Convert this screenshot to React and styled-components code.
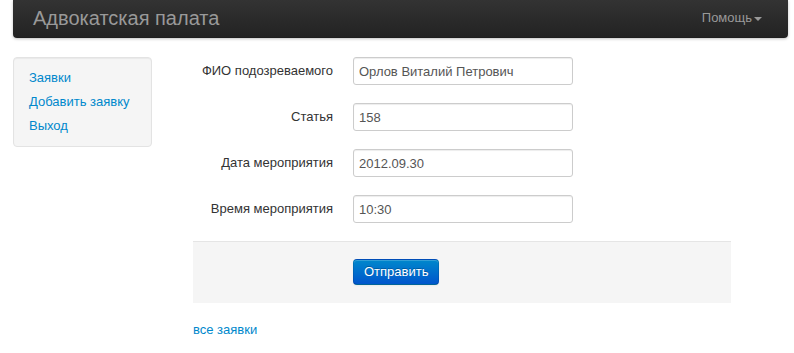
import React, { useState } from 'react';
import styled, { createGlobalStyle } from 'styled-components';

const GlobalStyle = createGlobalStyle`
  body {
    margin: 0;
    background: #fff;
    font-family: "Liberation Sans", Arial, Helvetica, sans-serif;
    font-size: 13px;
    line-height: 18px;
    color: #333;
  }
`;

const fields = [
  { id: 'fio', label: 'ФИО подозреваемого', value: 'Орлов Виталий Петрович' },
  { id: 'article', label: 'Статья', value: '158' },
  { id: 'date', label: 'Дата мероприятия', value: '2012.09.30' },
  { id: 'time', label: 'Время мероприятия', value: '10:30' },
];

const App = () => {
  const [values, setValues] = useState(
    Object.fromEntries(fields.map(f => [f.id, f.value]))
  );

  const handleChange = (id, value) => {
    setValues(prev => ({ ...prev, [id]: value }));
  };

  return (
    <>
      <GlobalStyle />
      <Page>
        <Navbar>
          <Brand href="#">Адвокатская палата</Brand>
          <HelpMenu href="#">
            Помощь
            <Caret />
          </HelpMenu>
        </Navbar>
        <Main>
          <Sidebar>
            <NavLink href="#">Заявки</NavLink>
            <NavLink href="#">Добавить заявку</NavLink>
            <NavLink href="#">Выход</NavLink>
          </Sidebar>
          <Content>
            <Form onSubmit={e => e.preventDefault()}>
              {fields.map(f => (
                <ControlGroup key={f.id}>
                  <ControlLabel htmlFor={f.id}>{f.label}</ControlLabel>
                  <Input
                    id={f.id}
                    value={values[f.id]}
                    onChange={e => handleChange(f.id, e.target.value)}
                  />
                </ControlGroup>
              ))}
              <FormActions>
                <PrimaryButton type="submit">Отправить</PrimaryButton>
              </FormActions>
            </Form>
            <BottomLink href="#">все заявки</BottomLink>
          </Content>
        </Main>
      </Page>
    </>
  );
};

export default App;

const Page = styled.div`
  width: 775px;
  padding-left: 13px;
`;

const Navbar = styled.div`
  display: flex;
  align-items: center;
  justify-content: space-between;
  height: 38px;
  padding: 0 20px;
  box-sizing: border-box;
  background-image: linear-gradient(to bottom, #333333, #222222);
  border-radius: 0 0 4px 4px;
  box-shadow: 0 1px 3px rgba(0, 0, 0, 0.25), inset 0 -1px 0 rgba(0, 0, 0, 0.1);
`;

const Brand = styled.a`
  font-size: 20px;
  line-height: 1;
  color: #999;
  text-decoration: none;
  margin-top: -3px;
`;

const HelpMenu = styled.a`
  display: flex;
  align-items: center;
  gap: 2px;
  color: #999;
  font-size: 13px;
  text-decoration: none;
  margin-right: 6px;
  margin-top: -2px;
`;

const Caret = styled.span`
  width: 0;
  height: 0;
  margin-top: 2px;
  border-left: 4px solid transparent;
  border-right: 4px solid transparent;
  border-top: 4px solid #999;
`;

const Main = styled.div`
  display: flex;
  margin-top: 19px;
`;

const Sidebar = styled.div`
  display: flex;
  flex-direction: column;
  width: 139px;
  height: 90px;
  box-sizing: border-box;
  padding: 8px 0;
  background: #f5f5f5;
  border: 1px solid #e3e3e3;
  border-radius: 4px;
  box-shadow: inset 0 1px 1px rgba(0, 0, 0, 0.05);
`;

const NavLink = styled.a`
  padding: 3px 15px;
  color: #0088cc;
  text-decoration: none;
`;

const Content = styled.div`
  width: 538px;
  margin-left: 41px;
`;

const Form = styled.form`
  margin: 0;
`;

const ControlGroup = styled.div`
  display: flex;
  align-items: center;
  margin-bottom: 18px;
`;

const ControlLabel = styled.label`
  width: 140px;
  margin-right: 20px;
  text-align: right;
  color: #333;
`;

const Input = styled.input`
  width: 220px;
  height: 28px;
  box-sizing: border-box;
  padding: 4px 5px;
  font-family: inherit;
  font-size: 13px;
  color: #555;
  border: 1px solid #ccc;
  border-radius: 3px;
  box-shadow: inset 0 1px 1px rgba(0, 0, 0, 0.075);
  outline: none;
`;

const FormActions = styled.div`
  padding: 17px 20px 18px 160px;
  margin-bottom: 18px;
  background: #f5f5f5;
  border-top: 1px solid #e5e5e5;
`;

const PrimaryButton = styled.button`
  height: 26px;
  padding: 0 10px;
  font-family: inherit;
  font-size: 13px;
  line-height: 18px;
  color: #fff;
  text-shadow: 0 -1px 0 rgba(0, 0, 0, 0.25);
  background-image: linear-gradient(to bottom, #0088cc, #0055cc);
  border: 1px solid rgba(0, 0, 0, 0.1);
  border-bottom-color: rgba(0, 0, 0, 0.25);
  border-radius: 4px;
  box-shadow: inset 0 1px 0 rgba(255, 255, 255, 0.2), 0 1px 2px rgba(0, 0, 0, 0.05);
  cursor: pointer;
`;

const BottomLink = styled.a`
  display: block;
  color: #0088cc;
  text-decoration: none;
`;
